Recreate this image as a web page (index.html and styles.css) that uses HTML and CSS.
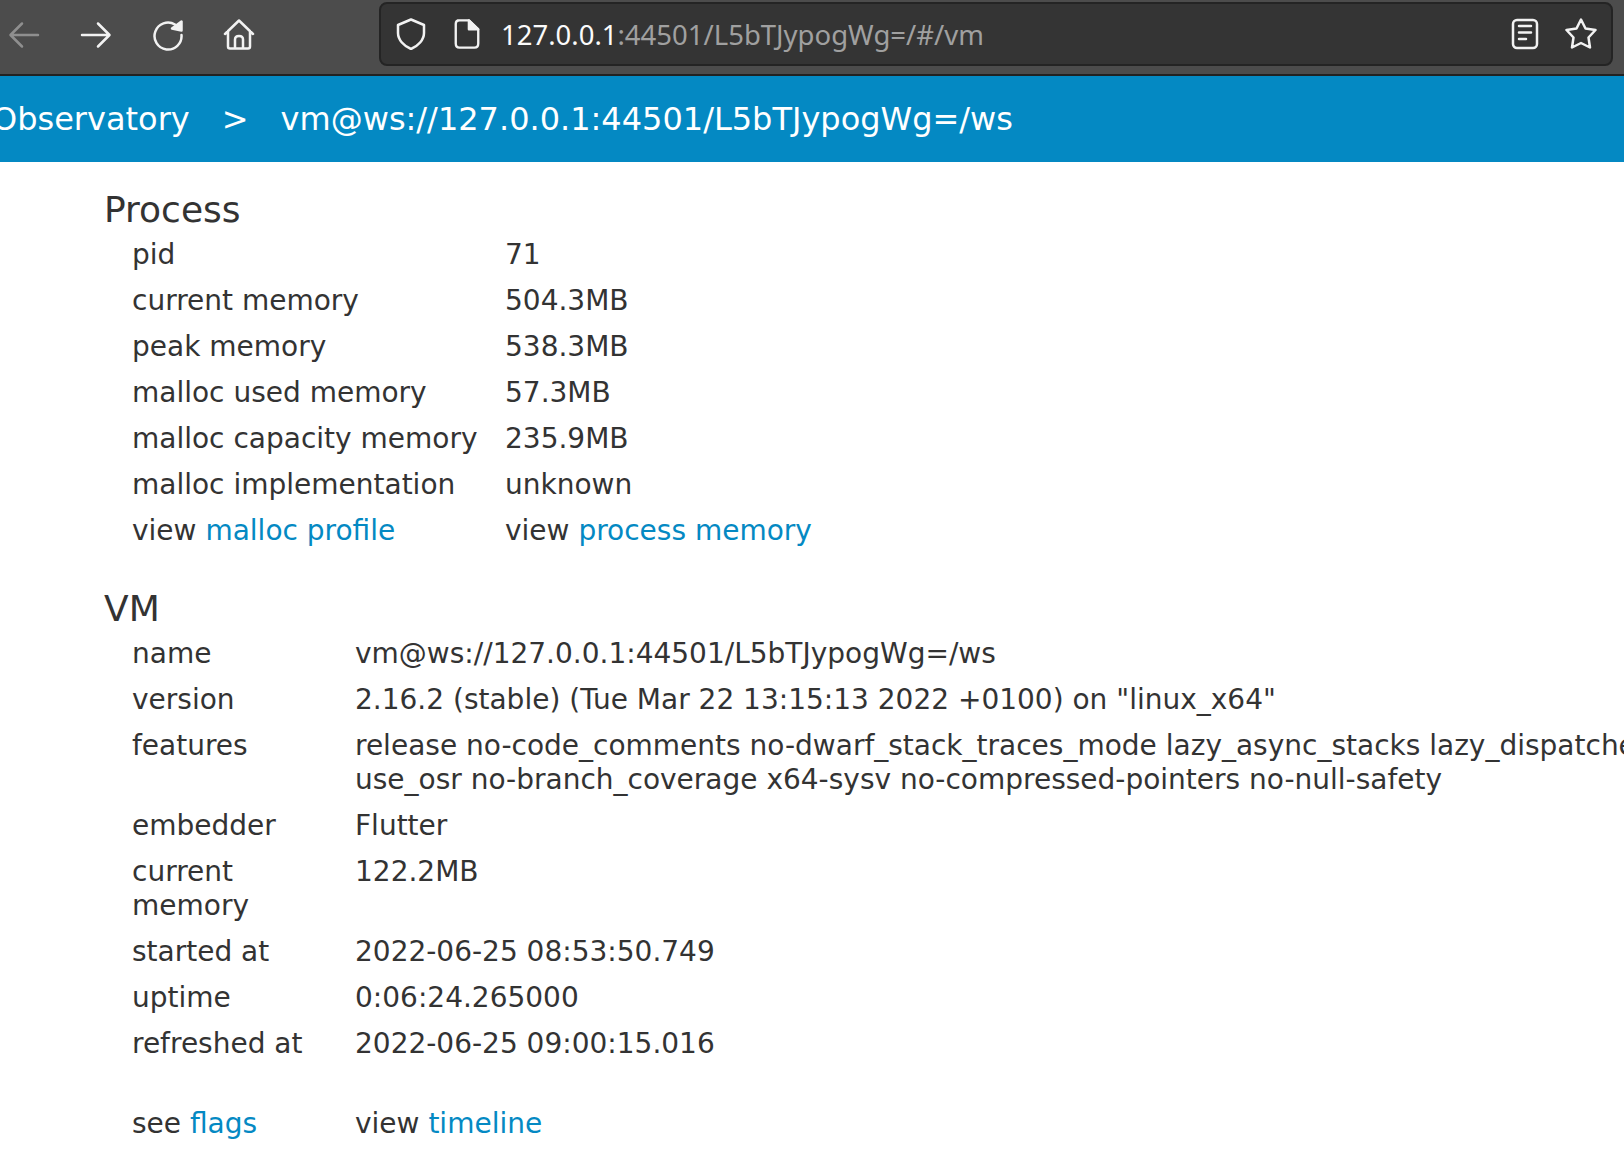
FILE: index.html
```html
<!DOCTYPE html>
<html lang="en">
<head>
    <meta charset="UTF-8">
    <meta name="viewport" content="width=device-width, initial-scale=1.0">
    <title>Observatory</title>
    <link rel="stylesheet" href="styles.css">
</head>
<body>
    <div class="toolbar">
        <div class="nav-buttons">
            <svg class="icon disabled" viewBox="0 0 32 32"><path d="M30 16H3M14 4.500 2.500 16 14 27.500"/></svg>
            <svg class="icon" viewBox="0 0 32 32"><path d="M2 16h27M18 4.500 29.500 16 18 27.500"/></svg>
            <svg class="icon" viewBox="0 0 32 32"><path d="M23 5.500A13.500 13.500 0 1 0 29.500 16"/><path class="solid" d="M20 9.500 29.500 2.500V11.500Z"/></svg>
            <svg class="icon home-icon" viewBox="0 0 32 32"><path d="M2 15 16 1.500 30 15M5 12V27.500Q5 29.500 7 29.500H25Q27 29.500 27 27.500V12M12 29V20.500Q12 17 16 17 20 17 20 20.500V29"/></svg>
        </div>
        <div class="urlbar">
            <svg class="icon" viewBox="0 0 32 32"><path d="M16 1.500 29 7V15C29 22 23 28 16 31 9 28 3 22 3 15V7Z"/></svg>
            <svg class="icon page-icon" viewBox="0 0 32 32"><path d="M6 1.500H18L28 11V26Q28 30.500 24 30.500H8Q4 30.500 4 26V5Q4 1.500 8 1.500Z"/><path class="solid" d="M18 1.500 28 11H18Z"/></svg>
            <div class="url"><span class="url-host">127.0.0.1</span>:44501/L5bTJypogWg=/#/vm</div>
            <svg class="icon reader-icon" viewBox="0 0 32 32"><rect x="4" y="2" width="24" height="28" rx="4"/><path d="M10 8H22M10 14.500H22M10 21H17"/></svg>
            <svg class="icon star-icon" viewBox="0 0 32 32"><path d="M16 1.500 20.500 10.500 30.500 12 23.500 19.500 25 29.500 16 25 7 29.500 8.500 19.500 1.500 12 11.500 10.500Z"/></svg>
        </div>
    </div>

    <div class="nav-bar">
        <span>Observatory</span>
        <span class="nav-sep">&gt;</span>
        <span>vm@ws://127.0.0.1:44501/L5bTJypogWg=/ws</span>
    </div>

    <div class="content">
        <h2>Process</h2>
        <div class="member-list process-list">
            <div class="member-name">pid</div><div>71</div>
            <div class="member-name">current memory</div><div>504.3MB</div>
            <div class="member-name">peak memory</div><div>538.3MB</div>
            <div class="member-name">malloc used memory</div><div>57.3MB</div>
            <div class="member-name">malloc capacity memory</div><div>235.9MB</div>
            <div class="member-name">malloc implementation</div><div>unknown</div>
            <div class="member-name">view <a href="#">malloc profile</a></div><div>view <a href="#">process memory</a></div>
        </div>

        <h2 class="vm-title">VM</h2>
        <div class="member-list vm-list">
            <div class="member-name">name</div><div>vm@ws://127.0.0.1:44501/L5bTJypogWg=/ws</div>
            <div class="member-name">version</div><div>2.16.2 (stable) (Tue Mar 22 13:15:13 2022 +0100) on "linux_x64"</div>
            <div class="member-name">features</div><div class="features">release no-code_comments no-dwarf_stack_traces_mode lazy_async_stacks lazy_dispatchers<br>use_osr no-branch_coverage x64-sysv no-compressed-pointers no-null-safety</div>
            <div class="member-name">embedder</div><div>Flutter</div>
            <div class="member-name">current<br>memory</div><div>122.2MB</div>
            <div class="member-name">started at</div><div>2022-06-25 08:53:50.749</div>
            <div class="member-name">uptime</div><div>0:06:24.265000</div>
            <div class="member-name">refreshed at</div><div>2022-06-25 09:00:15.016</div>
        </div>
        <div class="member-list vm-list vm-links">
            <div class="member-name">see <a href="#">flags</a></div><div>view <a href="#">timeline</a></div>
        </div>
    </div>
</body>
</html>
```

FILE: styles.css
```css
html, body {
    margin: 0;
    height: 100%;
    overflow: hidden;
    background: white;
}
body {
    font-family: "DejaVu Sans", sans-serif;
    font-size: 28px;
    line-height: 34px;
    color: #333;
}
a {
    color: #0489c3;
    text-decoration: none;
}

/* browser chrome */
.toolbar {
    display: flex;
    align-items: flex-start;
    height: 76px;
    padding-top: 2px;
    box-sizing: border-box;
    background: #4c4c4c;
    border-bottom: 2px solid #222;
}
.nav-buttons {
    display: flex;
    gap: 40px;
    width: 379px;
    padding: 17px 0 0 8px;
    box-sizing: border-box;
}
.icon {
    width: 32px;
    height: 32px;
    flex: none;
    fill: none;
    stroke: #f2f2f2;
    stroke-width: 2.500;
    stroke-linecap: round;
    stroke-linejoin: round;
}
.icon .solid {
    fill: #f2f2f2;
}
.icon.disabled {
    stroke: #8f8f8f;
}
.home-icon {
    margin-left: -1px;
}
.urlbar {
    display: flex;
    align-items: center;
    width: 1234px;
    height: 64px;
    box-sizing: border-box;
    padding: 0 14px;
    background: #343434;
    border: 2px solid #242424;
    border-radius: 8px;
}
.page-icon {
    margin-left: 25px;
    width: 30px;
}
.url {
    flex: 1;
    margin-left: 19px;
    padding-top: 2px;
    font-family: "Noto Sans", sans-serif;
    font-size: 27.5px;
    color: #a0a0a0;
    white-space: nowrap;
}
.url-host {
    color: #fbfbfb;
}
.star-icon {
    margin-left: 24px;
}

/* observatory header */
.nav-bar {
    display: flex;
    align-items: center;
    gap: 32px;
    height: 86px;
    margin-left: -8px;
    box-sizing: border-box;
    background: #0489c3;
    color: white;
    font-size: 32px;
    white-space: nowrap;
}

.content {
    padding: 26px 0 0 104px;
}
h2 {
    margin: 0;
    font-size: 36px;
    font-weight: normal;
    line-height: 44px;
}
.vm-title {
    margin-top: 39px;
}
.member-list {
    display: grid;
    row-gap: 12px;
    padding: 6px 0 0 28px;
    white-space: nowrap;
}
.process-list {
    grid-template-columns: 373px 1fr;
}
.vm-list {
    grid-template-columns: 223px 1fr;
}
.vm-links {
    padding-top: 46px;
}
```
